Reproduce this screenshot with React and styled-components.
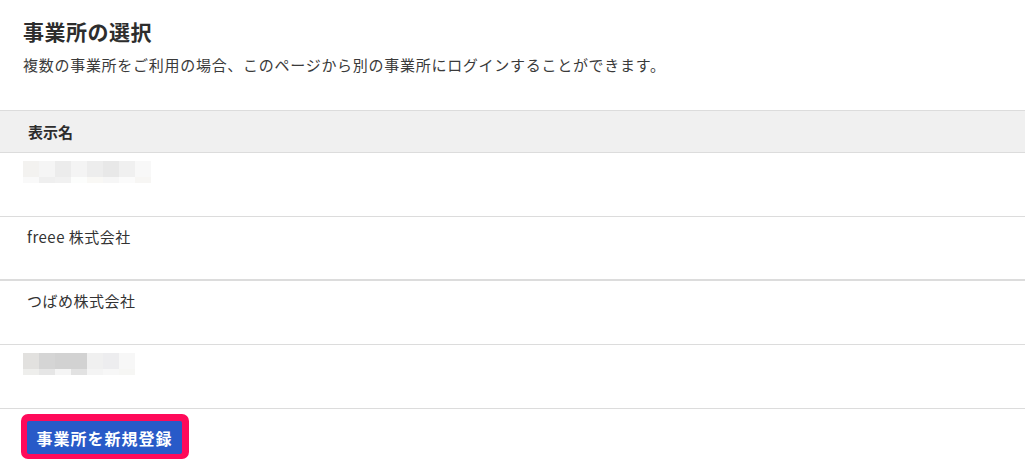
import React from 'react';
import styled, { createGlobalStyle } from 'styled-components';

const GlobalStyle = createGlobalStyle`
  html, body {
    margin: 0;
    padding: 0;
    background: #fff;
  }
  body {
    font-family: "Noto Sans CJK JP", "Noto Sans", sans-serif;
    color: #323232;
  }
`;

const Page = styled.div`
  width: 1025px;
  height: 475px;
  overflow: hidden;
  background: #fff;
`;

const Intro = styled.div`
  padding: 15px 0 0 23px;
  height: 110px;
  box-sizing: border-box;
`;

const Title = styled.h1`
  margin: 0;
  font-size: 21px;
  letter-spacing: 0.5px;
  line-height: 32px;
  font-weight: 700;
  color: #2d2d2d;
`;

const Lead = styled.p`
  margin: 1px 0 0;
  font-size: 15px;
  letter-spacing: 0.72px;
  line-height: 34px;
  color: #3a3a3a;
`;

const Table = styled.div`
  border-top: 1px solid #dcdcdc;
`;

const HeadRow = styled.div`
  height: 41px;
  background: #f0f0f0;
  border-bottom: 1px solid #dcdcdc;
  display: flex;
  align-items: center;
  padding-left: 28px;
  font-size: 15px;
  font-weight: 700;
  color: #2d2d2d;
`;

const Row = styled.div`
  box-sizing: border-box;
  height: 64px;
  padding: ${p => (p.$blur ? '8px 0 0 23px' : '8px 0 0 27px')};
  border-bottom: ${p => (p.$thick ? 2 : 1)}px solid #dcdcdc;
  font-size: 15px;
  letter-spacing: 0.5px;
  line-height: 24px;
  color: #333;
`;

const Mosaic = styled.div`
  display: grid;
  grid-template-columns: repeat(${p => p.$cols}, 16px);
  grid-template-rows: 16px 6px;
  width: max-content;
`;

const Cell = styled.div`
  background: ${p => p.$c};
`;

const Footer = styled.div`
  padding: 5px 0 0 21px;
`;

const Highlight = styled.div`
  display: inline-flex;
  border: solid #ff0a5a;
  border-width: 7px 7px 5px 6px;
  border-radius: 7px;
  background: #ff0a5a;
`;

const PrimaryButton = styled.button`
  width: 155px;
  height: 33px;
  border: none;
  border-radius: 2px;
  background: #285ac8;
  color: #fff;
  font-family: inherit;
  font-size: 16px;
  font-weight: 700;
  letter-spacing: 1px;
  padding: 0;
  cursor: pointer;
`;

const blurA = [
  '#f3f2f0', '#f5f5f5', '#ececec', '#f4f4f4', '#ededed', '#e8e8e8', '#f0f0f0', '#f8f8f8',
  '#f9f9f9', '#efefef', '#f1f1f1', '#fcfdfc', '#f9f8f5', '#f6f6f6', '#fbfbfb', '#f7f6f4',
];

const blurB = [
  '#e2e1df', '#d5d5d5', '#d2d2d2', '#d2d2d2', '#f0f0f0', '#ededef', '#f7f7f7',
  '#eeeeec', '#e6e6e6', '#f5f5f5', '#e2e2e2', '#f4f4f4', '#f7f7f7', '#f6f6f4',
];

const BlurredName = ({ colors, cols }) => (
  <Mosaic $cols={cols}>
    {colors.map((c, i) => <Cell key={i} $c={c} />)}
  </Mosaic>
);

const App = () => {
  return (
    <Page>
      <GlobalStyle />
      <Intro>
        <Title>事業所の選択</Title>
        <Lead>複数の事業所をご利用の場合、このページから別の事業所にログインすることができます。</Lead>
      </Intro>
      <Table>
        <HeadRow>表示名</HeadRow>
        <Row $blur><BlurredName colors={blurA} cols={8} /></Row>
        <Row $thick>freee 株式会社</Row>
        <Row>つばめ株式会社</Row>
        <Row $blur><BlurredName colors={blurB} cols={7} /></Row>
      </Table>
      <Footer>
        <Highlight>
          <PrimaryButton type="button">事業所を新規登録</PrimaryButton>
        </Highlight>
      </Footer>
    </Page>
  );
};

export default App;
